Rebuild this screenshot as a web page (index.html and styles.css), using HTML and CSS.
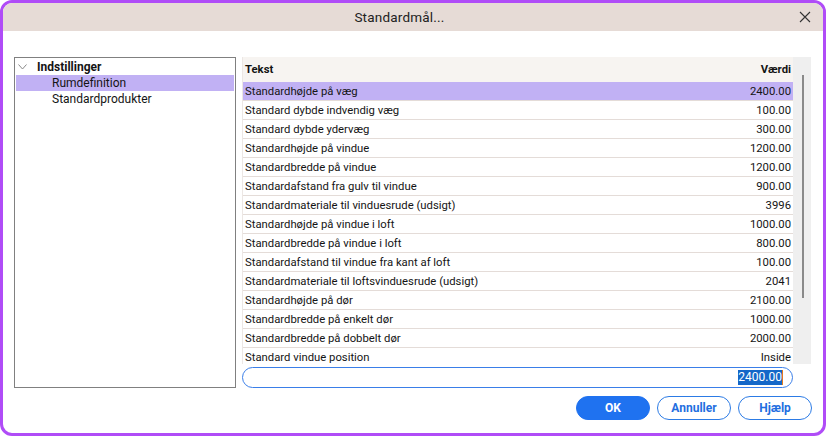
FILE: index.html
```html
<!DOCTYPE html>
<html lang="da">
<head>
<meta charset="utf-8">
<title>Standardmål...</title>
<link rel="stylesheet" href="styles.css">
</head>
<body>
<div class="window">
  <div class="titlebar">
    <span class="title">Standardmål...</span>
    <svg class="close" width="12" height="12" viewBox="0 0 12 12"><path d="M1 1L11 11M11 1L1 11" stroke="#333" stroke-width="1.1" fill="none"/></svg>
  </div>
  <div class="content">
    <div class="tree">
      <div class="tree-row root">
        <svg class="chev" width="9" height="6" viewBox="0 0 9 6"><path d="M0.5 0.5L4.5 5L8.5 0.5" stroke="#8a8a8a" stroke-width="1" fill="none"/></svg>
        <span>Indstillinger</span>
      </div>
      <div class="tree-row child selected">Rumdefinition</div>
      <div class="tree-row child">Standardprodukter</div>
    </div>
    <div class="right">
      <div class="grid-wrap">
        <div class="table">
          <div class="row head"><span>Tekst</span><span>Værdi</span></div>
          <div class="row selected"><span>Standardhøjde på væg</span><span>2400.00</span></div>
          <div class="row"><span>Standard dybde indvendig væg</span><span>100.00</span></div>
          <div class="row"><span>Standard dybde ydervæg</span><span>300.00</span></div>
          <div class="row"><span>Standardhøjde på vindue</span><span>1200.00</span></div>
          <div class="row"><span>Standardbredde på vindue</span><span>1200.00</span></div>
          <div class="row"><span>Standardafstand fra gulv til vindue</span><span>900.00</span></div>
          <div class="row"><span>Standardmateriale til vinduesrude (udsigt)</span><span>3996</span></div>
          <div class="row"><span>Standardhøjde på vindue i loft</span><span>1000.00</span></div>
          <div class="row"><span>Standardbredde på vindue i loft</span><span>800.00</span></div>
          <div class="row"><span>Standardafstand til vindue fra kant af loft</span><span>100.00</span></div>
          <div class="row"><span>Standardmateriale til loftsvinduesrude (udsigt)</span><span>2041</span></div>
          <div class="row"><span>Standardhøjde på dør</span><span>2100.00</span></div>
          <div class="row"><span>Standardbredde på enkelt dør</span><span>1000.00</span></div>
          <div class="row"><span>Standardbredde på dobbelt dør</span><span>2000.00</span></div>
          <div class="row last"><span>Standard vindue position</span><span>Inside</span></div>
        </div>
        <div class="scroll"><div class="thumb"></div></div>
      </div>
      <div class="input"><span class="sel">2400.00</span><span class="caret"></span></div>
    </div>
  </div>
  <div class="buttons">
    <button class="btn primary">OK</button>
    <button class="btn">Annuller</button>
    <button class="btn">Hjælp</button>
  </div>
</div>
</body>
</html>
```
FILE: styles.css
```css
html, body {
  margin: 0;
  padding: 0;
  background: #ffffff;
}
body {
  width: 826px;
  height: 436px;
  font-family: "Roboto", "Liberation Sans", sans-serif;
  font-size: 11.3px;
  color: #141414;
}
.window {
  box-sizing: border-box;
  width: 826px;
  height: 436px;
  border: 3px solid #b04cf7;
  border-radius: 12px;
  background: #ffffff;
  overflow: hidden;
  display: flex;
  flex-direction: column;
}
.titlebar {
  height: 28px;
  flex: none;
  background: #e6dbd6;
  display: flex;
  align-items: center;
  justify-content: center;
  position: relative;
}
.title {
  font-size: 13.5px;
  color: #222;
  letter-spacing: 0.2px;
  margin-left: -27px;
}
.close {
  position: absolute;
  right: 12px;
  top: 8px;
}
.content {
  margin: 26px 12px 0 11px;
  display: grid;
  grid-template-columns: 222px 569px;
  column-gap: 6px;
}
.tree {
  box-sizing: border-box;
  height: 331px;
  border: 1px solid #808080;
  padding: 1px;
}
.tree-row {
  height: 16px;
  line-height: 16px;
  white-space: nowrap;
}
.tree-row.root {
  display: flex;
  align-items: center;
  font-weight: 700;
  font-size: 12px;
  height: 16px;
}
.chev {
  margin-left: 2px;
  margin-right: 10px;
}
.tree-row.child {
  padding-left: 36px;
  font-size: 12px;
  height: 16px;
}
.tree-row.selected {
  background: #c1b1f4;
}
.tree-row.child + .tree-row.child {
  height: 17px;
  line-height: 17px;
}
.right {
  display: flex;
  flex-direction: column;
}
.grid-wrap {
  display: flex;
  height: 307px;
  overflow: hidden;
}
.table {
  width: 551px;
  border-left: 1px solid #ece7e4;
  box-sizing: border-box;
}
.row {
  box-sizing: border-box;
  height: 19px;
  display: flex;
  justify-content: space-between;
  align-items: center;
  padding: 0 2px 0 2px;
  border-bottom: 1px solid #e4dcd8;
  white-space: nowrap;
}
.row.head {
  height: 25px;
  background: #f7f4f1;
  font-weight: 700;
  border-bottom: none;
}
.row.selected {
  background: #c1b1f4;
}
.row.last {
  border-bottom: none;
}
.scroll {
  width: 18px;
  flex: none;
  background: #efefef;
  display: flex;
  justify-content: center;
  padding-top: 18px;
  box-sizing: border-box;
}
.thumb {
  width: 2px;
  height: 223px;
  background: #8a8a8a;
  margin-left: 1px;
}
.input {
  box-sizing: border-box;
  width: 551px;
  height: 21px;
  margin-top: 3px;
  border: 1px solid #3a7ee8;
  border-radius: 11px;
  display: flex;
  justify-content: flex-end;
  align-items: center;
  padding-right: 9px;
}
.sel {
  background: #1467c8;
  color: #ffffff;
  line-height: 15px;
  font-size: 12px;
}
.caret {
  width: 1px;
  height: 15px;
  background: #e27a1c;
}
.buttons {
  display: flex;
  justify-content: flex-end;
  gap: 7px;
  margin: 8px 11px 0 0;
}
.btn {
  box-sizing: border-box;
  width: 74px;
  height: 24px;
  border: 1px solid #2c7be5;
  border-radius: 12px;
  background: #ffffff;
  color: #1f6ee0;
  font-family: "Roboto", "Liberation Sans", sans-serif;
  font-weight: 700;
  font-size: 12px;
  padding: 0;
}
.btn.primary {
  background: #1f72f0;
  border-color: #1f72f0;
  color: #ffffff;
}
```
